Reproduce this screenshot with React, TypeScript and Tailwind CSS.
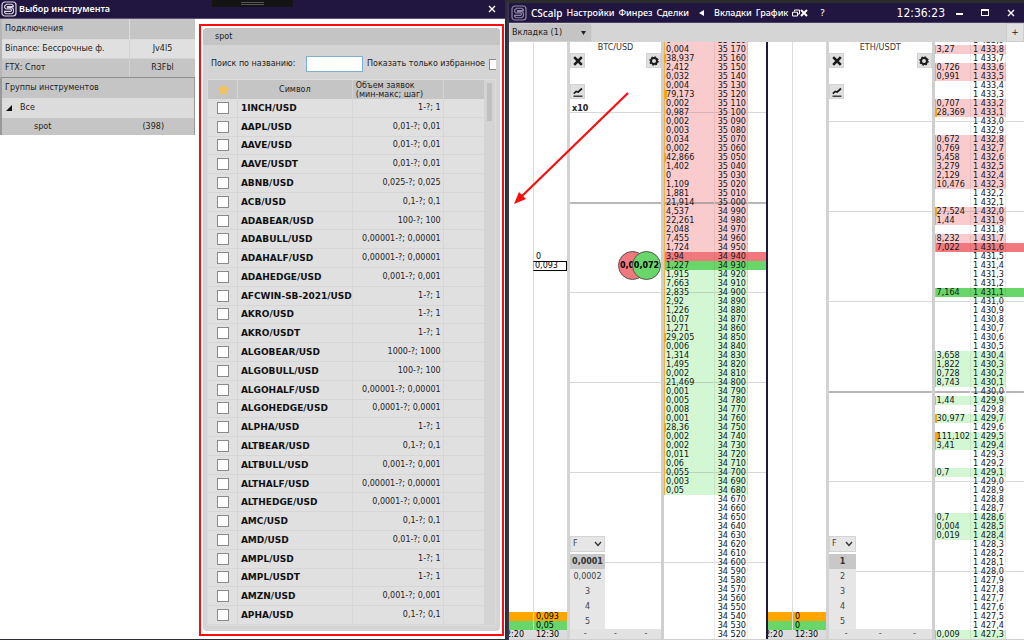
import React from "react";

type Side = "ask" | "bid" | "bestAsk" | "bestBid" | "none";
type Level = { price: string; volume: string; side: Side; line: "none" | "thin" | "thick"; bar: number };

const symbols: [string, string][] = [
  ["1INCH/USD", "1-?; 1"],
  ["AAPL/USD", "0,01-?; 0,01"],
  ["AAVE/USD", "0,01-?; 0,01"],
  ["AAVE/USDT", "0,01-?; 0,01"],
  ["ABNB/USD", "0,025-?; 0,025"],
  ["ACB/USD", "0,1-?; 0,1"],
  ["ADABEAR/USD", "100-?; 100"],
  ["ADABULL/USD", "0,00001-?; 0,00001"],
  ["ADAHALF/USD", "0,00001-?; 0,00001"],
  ["ADAHEDGE/USD", "0,001-?; 0,001"],
  ["AFCWIN-SB-2021/USD", "1-?; 1"],
  ["AKRO/USD", "1-?; 1"],
  ["AKRO/USDT", "1-?; 1"],
  ["ALGOBEAR/USD", "1000-?; 1000"],
  ["ALGOBULL/USD", "100-?; 100"],
  ["ALGOHALF/USD", "0,00001-?; 0,00001"],
  ["ALGOHEDGE/USD", "0,0001-?; 0,0001"],
  ["ALPHA/USD", "1-?; 1"],
  ["ALTBEAR/USD", "0,1-?; 0,1"],
  ["ALTBULL/USD", "0,001-?; 0,001"],
  ["ALTHALF/USD", "0,00001-?; 0,00001"],
  ["ALTHEDGE/USD", "0,0001-?; 0,0001"],
  ["AMC/USD", "0,1-?; 0,1"],
  ["AMD/USD", "0,01-?; 0,01"],
  ["AMPL/USD", "1-?; 1"],
  ["AMPL/USDT", "1-?; 1"],
  ["AMZN/USD", "0,001-?; 0,001"],
  ["APHA/USD", "0,1-?; 0,1"],
];

const btcVolumes =
  "0 0,004 38,937 2,412 0,032 0,004 79,173 0,002 0,987 0,002 0,003 0,034 0,002 42,866 1,402 0 1,109 1,881 21,914 4,537 22,261 2,048 7,455 1,724 3,94 1,227 1,915 7,663 2,835 2,92 1,226 10,07 1,271 29,205 0,006 1,314 1,495 0,002 21,469 0,001 0,005 0,008 0,001 28,36 0,002 0,002 0,011 0,06 0,055 0,003 0,05".split(" ");

const ethVolumes: Record<string, string> = {
  "1 433,8": "3,27", "1 433,6": "0,726", "1 433,5": "0,991", "1 433,2": "0,707", "1 433,1": "28,369",
  "1 432,8": "0,672", "1 432,7": "0,769", "1 432,6": "5,458", "1 432,5": "3,279", "1 432,4": "2,129",
  "1 432,3": "10,476", "1 432,0": "27,524", "1 431,9": "1,44", "1 431,7": "8,232", "1 431,6": "7,022",
  "1 431,1": "7,164", "1 430,4": "3,658", "1 430,3": "1,822", "1 430,2": "0,728", "1 430,1": "8,743",
  "1 429,9": "1,44", "1 429,7": "30,977", "1 429,5": "111,102", "1 429,4": "3,41", "1 429,1": "0,7",
  "1 428,6": "0,7", "1 428,5": "0,004", "1 428,4": "0,019", "1 427,3": "0,009",
};

function barFor(volume: string, base: number) {
  const v = parseFloat(volume.replace(",", "."));
  return v > 100 ? 4 : v > 60 ? 3 : v > 25 ? 2 : base;
}

const btcLevels: Level[] = Array.from({ length: 67 }, (_, i) => {
  const p = 35180 - i * 10;
  const volume = btcVolumes[i] ?? "";
  const side: Side = p === 34940 ? "bestAsk" : p === 34930 ? "bestBid" : !volume ? "none" : p > 34940 ? "ask" : "bid";
  return {
    price: `${Math.floor(p / 1000)} ${String(p % 1000).padStart(3, "0")}`,
    volume,
    side,
    line: p === 35000 ? "thick" : p % 100 === 0 ? "thin" : "none",
    bar: volume ? barFor(volume, 1) : 0,
  };
});

const ethLevels: Level[] = Array.from({ length: 67 }, (_, i) => {
  const p = 14339 - i;
  const price = `1 ${Math.floor(p / 10) - 1000},${p % 10}`;
  const volume = ethVolumes[price] ?? "";
  const side: Side = p === 14316 ? "bestAsk" : p === 14311 ? "bestBid" : !volume ? "none" : p > 14316 ? "ask" : "bid";
  return { price, volume, side, line: p === 14300 ? "thick" : p % 10 === 0 ? "thin" : "none", bar: volume ? barFor(volume, 1) : 0 };
});

const sideClass: Record<Side, string> = {
  ask: "bg-[#f9cbcd]",
  bid: "bg-[#d3f7d3]",
  bestAsk: "bg-[#f1797d]",
  bestBid: "bg-[#69d669]",
  none: "",
};
const lineClass = {
  none: "",
  thin: "bg-[image:linear-gradient(#8885,#8885)] bg-[length:100%_1px] bg-center bg-no-repeat",
  thick: "bg-[image:linear-gradient(#8889,#8889)] bg-[length:100%_2px] bg-center bg-no-repeat",
};
const barClass = ["", "shadow-[inset_1px_0_#f5b040]", "shadow-[inset_2px_0_#ffa500]", "shadow-[inset_3px_0_#ffa500]", "shadow-[inset_4px_0_#ffa500]"];

function Logo({ className }: { className: string }) {
  return (
    <svg viewBox="0 0 16 16" className={`size-4 shrink-0 ${className}`} fill="none" stroke="currentColor" aria-hidden="true">
      <rect x="1" y="1" width="14" height="14" rx="3" strokeWidth="1.2" />
      <path d="M12.3 5.6V4.6L10.8 3.3H5.6L3.6 5V6.6L5 8H9.6L10.4 8.7V9.6L9.6 10.4H3.6V11.4L5 12.8H10.8L12.4 11.2V8L10.8 6.6H6.4V5.6Z" strokeWidth="1.1" />
    </svg>
  );
}

function Close() {
  return (
    <svg viewBox="0 0 8 8" className="size-2" stroke="currentColor" strokeWidth="1.4" aria-hidden="true">
      <path d="M1 1L7 7M7 1L1 7" />
    </svg>
  );
}

function Picker() {
  return (
    <section className="flex min-w-0 flex-col border-b border-[#2d2d3c] bg-white">
      <header className="relative flex h-[19px] shrink-0 items-center gap-[2px] border-b border-[#5b5078] bg-[#21163f] pl-[1px] pr-[9px] text-white">
        <Logo className="text-[#d8d4e0]" />
        <h1 className="font-['Noto_Sans'] text-[9px] font-semibold leading-4">Выбор инструмента</h1>
        <div className="absolute left-[212px] top-0 flex h-[7px] w-[81px] items-center justify-center bg-[#141414]">
          <span className="h-[3px] w-[23px] border-y border-[#555]" />
        </div>
        <button aria-label="Закрыть" className="ml-auto"><Close /></button>
      </header>
      <div className="flex min-h-0 flex-1 pb-[3px]">
        <nav className="w-[195px] shrink-0 text-[8px] leading-[10px] text-[#222]">
          <table className="w-full border-separate border-spacing-0 border-b border-l-2 border-b-[#8e8e8e] border-l-[#b5b5b5] bg-[#dcdcdc]">
            <thead>
              <tr className="h-[21px] bg-[#c5c5c5] text-left"><th className="w-[128px] border-b border-r border-[#dcdcdc] pl-[3px] font-normal">Подключения</th><th className="border-b border-[#dcdcdc]" /></tr>
            </thead>
            <tbody>
              <tr className="h-[19px] bg-[#e0e0e0]"><td className="border-b border-r border-[#d3d3d3] pl-[3px]">Binance: Бессрочные ф.</td><td className="border-b border-[#d3d3d3] text-center">Jv4l5</td></tr>
              <tr className="h-[18px] bg-[#c5c5c5]"><td className="border-r border-[#d3d3d3] pl-[3px]">FTX: Спот</td><td className="text-center">R3Fbl</td></tr>
            </tbody>
          </table>
          <div className="border-l-2 border-r border-[#999] bg-[#dcdcdc]">
            <h2 className="flex h-[20px] items-center bg-[#c5c5c5] pl-[3px]">Группы инструментов</h2>
            <button className="flex h-[20px] w-full items-center gap-[8px] pl-[4px] text-left">
              <svg viewBox="0 0 6 6" className="size-[6px]" aria-hidden="true"><path d="M6 0V6H0Z" fill="#111" /></svg>
              Все
            </button>
            <a href="#spot" className="flex h-[17px] items-center justify-between bg-[#c5c5c5] pl-[32px] pr-[30px]"><span>spot</span><span>(398)</span></a>
          </div>
        </nav>
        <main className="ml-1 mr-[1px] mt-[5px] flex min-w-0 flex-1 flex-col border-2 border-[#fb0d0d] px-[2px] pb-[3px] pt-[2px]">
          <div className="flex min-h-0 flex-1 flex-col rounded-[4px] bg-[#d4d4d4] px-1 pb-[5px] text-[8px] leading-[10px] text-[#222]">
            <h2 className="-mx-1 flex h-[17px] shrink-0 items-center rounded-t-[4px] bg-[#c4c4c4] pl-3">spot</h2>
            <div className="flex h-[34px] shrink-0 items-center overflow-hidden whitespace-nowrap pl-1 pt-1">
              <label htmlFor="find" className="w-[95px] shrink-0">Поиск по названию:</label>
              <input id="find" className="h-4 w-[57px] shrink-0 border border-[#7fb0d4] bg-white px-1" />
              <label htmlFor="fav" className="ml-1 mr-1 shrink-0">Показать только избранное</label>
              <input id="fav" type="checkbox" className="h-[11px] w-[11px] shrink-0 appearance-none border border-[#8a8a8a] bg-white" />
            </div>
            <div className="flex min-h-0 flex-1 border border-[#dcdcdc]">
              <table className="h-full min-w-0 flex-1 table-fixed border-separate border-spacing-0">
                <colgroup><col className="w-[30px]" /><col /><col className="w-[91px]" /><col className="w-[41px]" /></colgroup>
                <thead>
                  <tr className="h-[19px] bg-[#c5c5c5]">
                    <th className="border-r border-[#d3d3d3] p-0">
                      <svg viewBox="0 0 24 24" className="ml-[9px] size-[13px]" aria-label="Избранное"><path d="M12 1l3.2 7.4 8 .7-6 5.3 1.8 7.9-7-4.2-7 4.2 1.8-7.9-6-5.3 8-.7z" fill="#f5c158" /></svg>
                    </th>
                    <th className="border-r border-[#d3d3d3] p-0 font-normal">Символ</th>
                    <th className="whitespace-nowrap border-r border-[#d3d3d3] py-0 pl-[3px] pr-0 text-left font-normal leading-[9px]">Объем заявок<br />(мин-макс; шаг)</th>
                    <th />
                  </tr>
                </thead>
                <tbody>
                  {symbols.map(([name, size]) => (
                    <tr key={name} className="bg-[#e0e0e0]">
                      <td className="border-b border-r border-[#d6d6d6] p-0">
                        <input type="checkbox" aria-label={name} className="ml-[9px] block size-3 appearance-none border border-[#8a8a8a] bg-white" />
                      </td>
                      <td className="whitespace-nowrap border-b border-r border-[#d6d6d6] py-0 pl-[3px] pr-0 text-[9px] font-bold text-[#111]">{name}</td>
                      <td className="whitespace-nowrap border-b border-r border-[#d6d6d6] py-0 pr-[2px] text-right">{size}</td>
                      <td className="border-b border-[#d6d6d6] p-0" />
                    </tr>
                  ))}
                </tbody>
              </table>
              <div className="w-[11px] shrink-0 px-[3px] pt-[3px]"><div className="h-[38px] bg-[#c0c0c0]" /></div>
            </div>
          </div>
        </main>
      </div>
    </section>
  );
}

function Tool({ label, children }: { label: string; children: React.ReactNode }) {
  return <button aria-label={label} className="flex size-[15px] items-center justify-center border border-[#d3d3d3] bg-[#e0e0e0] text-[#1a1a1a]">{children}</button>;
}

function Clusters({ top, bottom, quote }: { top: string; bottom: string; quote: boolean }) {
  return (
    <div className="relative grid w-[58px] shrink-0 grid-cols-[24px_34px] grid-rows-[1fr_9px_9px_9px] text-[8px] leading-[9px] text-black">
      <div />
      <div className="border-l border-[#dcdcdc]" />
      <div className="bg-[#ffa500]" />
      <div className="border-l border-[#ddd] bg-[#ffa500] pl-[2px]">{top}</div>
      <div className="bg-[#69d669]" />
      <div className="border-l border-[#ddd] bg-[#69d669] pl-[2px]">{bottom}</div>
      <div className="flex justify-end overflow-hidden whitespace-nowrap bg-[#dcdcdc] pr-[9px]">12:20</div>
      <div className="bg-[#dcdcdc] pl-[3px]">12:30</div>
      {quote && (
        <div className="absolute left-6 top-[210px] w-[34px]">
          <div className="pl-[3px]">0</div>
          <div className="h-[10px] border border-black border-l-[#69d669] bg-white pl-[1px] leading-[8px]">0,093</div>
        </div>
      )}
    </div>
  );
}

function Market({ id, title, levels, sizes, menu, cols, clusters, leverage, quote, className }: {
  id: string; title: string; levels: Level[]; sizes: string[]; menu: string; cols: [string, string, string];
  clusters: [string, string]; leverage?: string; quote?: boolean; className: string;
}) {
  return (
    <article className={`flex min-h-0 min-w-0 ${className}`}>
      <Clusters top={clusters[0]} bottom={clusters[1]} quote={!!quote} />
      <div className="relative flex min-w-0 flex-1 flex-col justify-end overflow-hidden border-x-[3px] border-[#d3d3d3] border-r-[#cfcfcf]">
        {levels.map((l) => <div key={l.price} className={`h-[9px] shrink-0 ${lineClass[l.line]}`} />)}
        <h2 className="absolute inset-x-0 top-0 text-center font-['DejaVu_Sans_Condensed','DejaVu_Sans',sans-serif] text-[9px] leading-[11px] text-[#333]">{title}</h2>
        <div className="absolute inset-x-0 top-[11px] flex justify-between">
          <Tool label="Закрыть"><svg viewBox="0 0 10 10" className="size-[10px]" stroke="currentColor" strokeWidth="2.6" aria-hidden="true"><path d="M1.2 1.2L8.8 8.8M8.8 1.2L1.2 8.8" /></svg></Tool>
          <Tool label="Настройки">
            <svg viewBox="0 0 12 12" className="size-[10px]" fill="none" stroke="currentColor" aria-hidden="true">
              <circle cx="6" cy="6" r="3.6" strokeWidth="2.4" />
              <circle cx="6" cy="6" r="5" strokeWidth="1.4" strokeDasharray="2 1.93" />
            </svg>
          </Tool>
        </div>
        <div className="absolute left-0 top-[42px]">
          <Tool label="График"><svg viewBox="0 0 10 10" className="size-[10px]" fill="none" stroke="currentColor" aria-hidden="true"><path d="M0.5 9.2H9.5" strokeWidth="1.2" /><path d="M0.8 6.6L3.2 4.4L5.2 5L9 1.5" strokeWidth="1.7" /></svg></Tool>
          {leverage && <div className="mt-1 pl-[2px] text-[8px] font-bold leading-[12px] text-[#222]">{leverage}</div>}
        </div>
        {quote && (
          <div className="absolute right-0 top-[209px] flex text-[8px] font-bold leading-[28px] text-black">
            <div className="-mr-[15px] size-[29px] rounded-full border border-[#555] bg-[#f1797d] pl-[1px]">0,0</div>
            <div className="flex size-[29px] justify-center rounded-full border border-[#555] bg-[#69d669]">0,072</div>
          </div>
        )}
        <div className="absolute inset-x-0 bottom-0 text-[8px] text-[#444]">
          <div className={menu}>
            <label htmlFor={id} className="sr-only">Режим {title}</label>
            <div className="relative mb-[2px]">
              <select id={id} className="block h-4 w-full appearance-none border border-[#d4d4d4] bg-[#e6e6e6] pl-[2px] text-[8px] leading-[14px]"><option>F</option></select>
              <svg viewBox="0 0 8 6" className="pointer-events-none absolute right-[3px] top-[5px] h-[6px] w-2" fill="none" stroke="#333" strokeWidth="1.3" aria-hidden="true"><path d="M1 1L4 4.5L7 1" /></svg>
            </div>
            {sizes.map((s, i) => (
              <button key={s} className={`block h-[15px] w-full text-center leading-[15px] ${i === 0 ? "bg-[#c8c8c8] font-bold text-[#333]" : "bg-[#e6e6e6]"}`}>{s}</button>
            ))}
          </div>
          <div className="flex h-[10px] justify-around bg-[#e2e2e2] leading-[9px]"><span>-</span><span>-</span><span>-</span></div>
        </div>
      </div>
      <div className="flex shrink-0 flex-col justify-end overflow-hidden">
        <table className="table-fixed border-separate border-spacing-0 font-['DejaVu_Sans_Condensed','DejaVu_Sans',sans-serif] text-[9px] leading-[9px] text-[#151515]">
          <tbody>
            {levels.map((l) => {
              const wide = l.side === "bestAsk" || l.side === "bestBid" ? sideClass[l.side] : "";
              return (
                <tr key={l.price} className="h-[9px] whitespace-nowrap">
                  <td className={`border-r border-[#0001] py-0 pl-[2px] pr-0 ${cols[0]} ${sideClass[l.side]} ${lineClass[l.line]} ${barClass[l.bar]}`}>{l.volume}</td>
                  <td className={`border-r border-[#0001] py-0 pl-0 pr-[1px] text-right ${cols[1]} ${sideClass[l.side]} ${lineClass[l.line]}`}>{l.price}</td>
                  <td className={`p-0 ${cols[2]} ${wide} ${lineClass[l.line]}`} />
                </tr>
              );
            })}
          </tbody>
        </table>
      </div>
    </article>
  );
}

function Terminal() {
  return (
    <section className="flex min-h-0 min-w-0 flex-col border-l-2 border-l-[#3a3450] border-t-[3px] border-t-[#2d2d2d] bg-white">
      <header className="flex h-5 shrink-0 items-center border-b border-[#4a3f68] bg-[#21163f] pl-[2px] pr-[9px] font-['Noto_Sans'] text-[9px] font-medium leading-3 text-white">
        <Logo className="mr-1 text-[#8f88a3]" />
        <span className="text-[10px]">CScalp</span>
        <nav className="ml-1 flex items-center gap-1">
          <button>Настройки</button><button>Финрез</button><button>Сделки</button>
          <button aria-label="Назад" className="mx-[6px]"><svg viewBox="0 0 5 6" className="h-[6px] w-[5px]" aria-hidden="true"><path d="M5 0V6L0 3Z" fill="#fff" /></svg></button>
          <button>Вкладки</button><button>График</button>
          <button aria-label="Окна"><svg viewBox="0 0 8 8" className="size-2" fill="none" stroke="#fff" strokeWidth="1" aria-hidden="true"><path d="M2.5 2.5V1H7.5V5H6M0.5 3.2H5.5V7H0.5Z" /></svg></button>
          <button aria-label="Закрыть вкладку" className="-ml-[4px]"><svg viewBox="0 0 8 8" className="size-2" stroke="#fff" strokeWidth="2" aria-hidden="true"><path d="M1 1L7 7M7 1L1 7" /></svg></button>
          <button className="ml-2">?</button>
        </nav>
        <time className="ml-auto font-['DejaVu_Sans_Condensed','DejaVu_Sans',sans-serif] text-[12px] font-normal">12:36:23</time>
        <button aria-label="Свернуть" className="ml-[11px] mt-[3px] h-[2px] w-[7px] bg-white" />
        <button aria-label="Развернуть" className="ml-[18px] h-[7px] w-2 border border-t-2 border-white" />
        <button aria-label="Закрыть" className="ml-[18px]"><Close /></button>
      </header>
      <div className="flex h-[19px] shrink-0 items-stretch justify-between bg-[#d5d5d5] text-[9px] text-[#222]">
        <button className="flex w-[83px] items-center justify-between border border-[#d0d0d0] bg-[#c4c4c4] pl-[2px] pr-[5px] font-['DejaVu_Sans_Condensed','DejaVu_Sans',sans-serif]">
          Вкладка (1)
          <svg viewBox="0 0 5 4" className="h-1 w-[5px]" aria-hidden="true"><path d="M0 0H5L2.5 4Z" fill="#222" /></svg>
        </button>
        <button aria-label="Добавить вкладку" className="w-[18px] border border-[#ccc] bg-[#e0e0e0]">+</button>
      </div>
      <div className="flex min-h-0 flex-1 border-b border-[#d0d0d0]">
        <Market id="mode-btc" title="BTC/USD" levels={btcLevels} sizes={["0,0001", "0,0002", "3", "4", "5"]} menu="w-[35px]" cols={["w-[51px]", "w-[33px]", "w-[18px]"]} clusters={["0,093", "0,05"]} leverage="x10" quote className="flex-[257]" />
        <div className="w-[2px] shrink-0 bg-[#21163f]" />
        <Market id="mode-eth" title="ETH/USDT" levels={ethLevels} sizes={["1", "2", "3", "4", "5"]} menu="w-[27px]" cols={["w-[36px]", "w-[35px]", "w-[18px]"]} clusters={["0", "0"]} className="flex-[256]" />
      </div>
    </section>
  );
}

export default function App() {
  return (
    <div className="relative grid h-screen grid-cols-[505fr_519fr] grid-rows-[minmax(0,1fr)] overflow-hidden bg-[#2d2b38] font-['DejaVu_Sans','Noto_Sans',sans-serif]">
      <Picker />
      <div className="flex min-h-0 min-w-0 flex-col pl-[2px] *:flex-1"><Terminal /></div>
      <svg viewBox="0 0 118 114" className="pointer-events-none absolute left-[512px] top-[92px] h-[114px] w-[118px]" aria-hidden="true">
        <path d="M116 1L8 106" stroke="#fb0d0d" strokeWidth="2.2" />
        <path d="M2 112L7 100L14 107Z" fill="#fb0d0d" />
      </svg>
    </div>
  );
}
